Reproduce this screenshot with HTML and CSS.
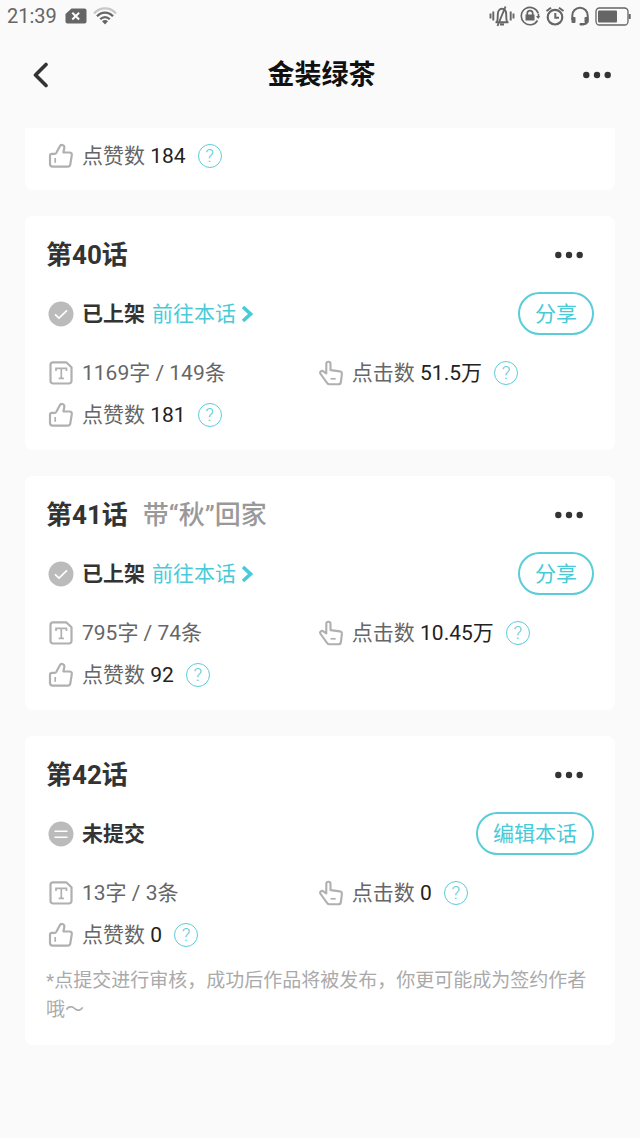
FILE: index.html
```html
<!DOCTYPE html>
<html lang="zh-CN">
<head>
<meta charset="utf-8">
<meta name="viewport" content="width=device-width, initial-scale=1">
<title>金装绿茶</title>
<link rel="stylesheet" href="styles.css">
</head>
<body>
<svg class="sprite" aria-hidden="true">
  <symbol id="like" viewBox="0 0 26 26">
    <path d="M2 12.800c0-1.300.7-2 2-2h2.700c.8 0 1.300-.4 1.700-1.100l3.300-6.200c.6-1.200 1.500-1.700 2.600-1.500 1.600.3 2.300 1.500 2 3l-.9 4.500h6.100c1.700 0 2.600 1 2.300 2.600l-1.500 9.300c-.2 1.500-1 2.200-2.400 2.200H4.500c-1.600 0-2.500-.9-2.500-2.500z" fill="none" stroke="currentColor" stroke-width="2.200" stroke-linejoin="round"/>
    <path d="M7.200 15v4.800" stroke="currentColor" stroke-width="1.700"/>
  </symbol>
  <symbol id="words" viewBox="0 0 26 26">
    <path d="M5 2.300h13.200l5.300 5V21a2.500 2.500 0 0 1-2.500 2.500H5A2.500 2.500 0 0 1 2.500 21V4.800A2.500 2.500 0 0 1 5 2.300z" fill="none" stroke="currentColor" stroke-width="2.200" stroke-linejoin="round"/>
    <path d="M8 11V8.300h10.500V11M13.300 8.300v10M10.700 18.300h5.200" fill="none" stroke="currentColor" stroke-width="1.700"/>
  </symbol>
  <symbol id="tap" viewBox="0 0 26 26">
    <path d="M8.300 13.500V3.900c0-1.300.8-2.200 2.100-2.200s2.100.9 2.100 2.200v6.200l9.300 1.300c1.600.2 2.300 1.100 2.100 2.600l-1 8c-.2 1.500-1 2.300-2.500 2.300h-9c-1 0-1.600-.3-2.200-1.100L2.600 14c-.7-1-.6-2 .2-2.700.9-.7 2-.5 2.800.3z" fill="none" stroke="currentColor" stroke-width="2.100" stroke-linejoin="round"/>
    <path d="M12.500 18.800h5.200" stroke="currentColor" stroke-width="1.700"/>
  </symbol>
  <symbol id="done" viewBox="0 0 26 26">
    <circle cx="13" cy="13" r="12.500" fill="currentColor"/>
    <path d="M7 13.300l4 3.700 8-7.700" fill="none" stroke="#fff" stroke-width="1.700"/>
  </symbol>
  <symbol id="draft" viewBox="0 0 26 26">
    <circle cx="13" cy="13" r="12.500" fill="currentColor"/>
    <path d="M6.500 10.200h13M6.500 16.200h13" stroke="#fff" stroke-width="1.500"/>
  </symbol>
  <symbol id="dots" viewBox="0 0 28 8">
    <circle cx="3.300" cy="4" r="3.200" fill="currentColor"/><circle cx="14" cy="4" r="3.200" fill="currentColor"/><circle cx="24.700" cy="4" r="3.200" fill="currentColor"/>
  </symbol>
  <symbol id="next" viewBox="0 0 12 18">
    <path d="M2 2l7.500 7L2 16" fill="none" stroke="currentColor" stroke-width="3.600"/>
  </symbol>
</svg>

<div class="statusbar">
  <div class="statusbar-side">
    <span>21:39</span>
    <svg width="22" height="16" viewBox="0 0 22 16" aria-label="无SIM卡"><path d="M6.500.5H19.500a2 2 0 0 1 2 2v11a2 2 0 0 1-2 2h-17a2 2 0 0 1-2-2V6z" fill="#666"/><path d="M7.300 4.700l6.800 6.800M14.100 4.700l-6.800 6.800" stroke="#fff" stroke-width="2"/></svg>
    <svg width="24" height="18" viewBox="0 0 24 18" aria-label="无线网络"><g fill="none" stroke="#666" stroke-width="2.200"><path d="M1 6.500C7-.3 17-.3 23 6.500" stroke="#c8c8c8"/><path d="M4 9.300c4.500-5 11.500-5 16 0"/><path d="M7.200 12.300c2.800-2.900 6.800-2.900 9.600 0"/></g><path d="M9 14.300c1.700-1.600 4.300-1.600 6 0L12 17.500z" fill="#666"/></svg>
  </div>
  <div class="statusbar-side statusbar-right">
    <svg width="26" height="22" viewBox="0 0 26 22" aria-label="静音振动"><g fill="none" stroke="#666" stroke-width="1.900"><path d="M1.500 8.500v5M4.300 6.500v9M21.700 6.500v9M24.500 8.500v5"/><path d="M6.500 17.300h13M8 17c.8-2.300.8-4 .8-7.500 0-3.600 1.800-5.800 4.200-5.800s4.200 2.200 4.200 5.800c0 3.500 0 5.200.8 7.500M11 19.500h4M16.500 1.500l-8 19.500"/></g></svg>
    <svg width="20" height="20" viewBox="0 0 20 20" aria-label="方向锁定"><path d="M17.500 14.500A8.700 8.700 0 1 1 18.300 7.500M18.500 8v4" fill="none" stroke="#666" stroke-width="1.600"/><path d="M16 10h4l-1.800 3z" fill="#666"/><rect x="5.500" y="8.500" width="9" height="6" fill="#666"/><path d="M7.300 9V7.300a2.700 2.700 0 0 1 5.400 0V9" fill="none" stroke="#666" stroke-width="1.700"/></svg>
    <svg width="20" height="20" viewBox="0 0 20 20" aria-label="闹钟"><circle cx="10" cy="11.200" r="7.300" fill="none" stroke="#666" stroke-width="2.200"/><path d="M10.300 7v4.800H14M1.500 5L6 1.700M14 1.700L18.500 5" fill="none" stroke="#666" stroke-width="2"/></svg>
    <svg width="20" height="20" viewBox="0 0 20 20" aria-label="耳机"><path d="M2.300 14V9.500a7.700 7.700 0 0 1 15.400 0V14c0 3-1.500 4.300-5 4.300" fill="none" stroke="#666" stroke-width="2"/><rect x="1.500" y="11" width="4" height="6" rx="1" fill="#666"/><rect x="14.500" y="11" width="4" height="6" rx="1" fill="#666"/><rect x="9.500" y="17" width="4.500" height="2.500" rx="1" fill="#666"/></svg>
    <svg width="36" height="19" viewBox="0 0 36 19" aria-label="电量"><rect x="1" y="1" width="32" height="17" rx="3.500" fill="none" stroke="#666" stroke-width="1.300"/><rect x="3" y="3.500" width="19" height="12" rx="1" fill="#666"/><path d="M34.700 7v5" stroke="#666" stroke-width="2"/></svg>
  </div>
</div>

<header class="navbar">
  <button class="icon-button" aria-label="返回"><svg width="18" height="26" viewBox="0 0 18 26"><path d="M14 2.500L3.500 13 14 23.500" fill="none" stroke="currentColor" stroke-width="3.600" stroke-linecap="round" stroke-linejoin="round"/></svg></button>
  <h1 class="navbar-title">金装绿茶</h1>
  <button class="icon-button" aria-label="更多"><svg class="dots"><use href="#dots"/></svg></button>
</header>

<main class="chapters">
  <section class="card card-partial">
    <div class="stat"><svg class="icon"><use href="#like"/></svg><span>点赞数 <b class="value">184</b></span><button class="help" aria-label="点赞数说明">?</button></div>
  </section>

  <section class="card">
    <div class="card-head">
      <h2 class="card-title">第40话</h2>
      <button class="icon-button" aria-label="更多"><svg class="dots"><use href="#dots"/></svg></button>
    </div>
    <div class="state-row">
      <svg class="icon state-icon"><use href="#done"/></svg>
      <strong class="state">已上架</strong>
      <a class="visit" href="#">前往本话<svg class="next"><use href="#next"/></svg></a>
      <button class="pill">分享</button>
    </div>
    <div class="stats">
      <div class="stat"><svg class="icon"><use href="#words"/></svg><span>1169字 / 149条</span></div>
      <div class="stat"><svg class="icon"><use href="#tap"/></svg><span>点击数 <b class="value">51.5万</b></span><button class="help" aria-label="点击数说明">?</button></div>
      <div class="stat"><svg class="icon"><use href="#like"/></svg><span>点赞数 <b class="value">181</b></span><button class="help" aria-label="点赞数说明">?</button></div>
    </div>
  </section>

  <section class="card">
    <div class="card-head">
      <h2 class="card-title">第41话</h2>
      <span class="card-subtitle">带“秋”回家</span>
      <button class="icon-button" aria-label="更多"><svg class="dots"><use href="#dots"/></svg></button>
    </div>
    <div class="state-row">
      <svg class="icon state-icon"><use href="#done"/></svg>
      <strong class="state">已上架</strong>
      <a class="visit" href="#">前往本话<svg class="next"><use href="#next"/></svg></a>
      <button class="pill">分享</button>
    </div>
    <div class="stats">
      <div class="stat"><svg class="icon"><use href="#words"/></svg><span>795字 / 74条</span></div>
      <div class="stat"><svg class="icon"><use href="#tap"/></svg><span>点击数 <b class="value">10.45万</b></span><button class="help" aria-label="点击数说明">?</button></div>
      <div class="stat"><svg class="icon"><use href="#like"/></svg><span>点赞数 <b class="value">92</b></span><button class="help" aria-label="点赞数说明">?</button></div>
    </div>
  </section>

  <section class="card">
    <div class="card-head">
      <h2 class="card-title">第42话</h2>
      <button class="icon-button" aria-label="更多"><svg class="dots"><use href="#dots"/></svg></button>
    </div>
    <div class="state-row">
      <svg class="icon state-icon"><use href="#draft"/></svg>
      <strong class="state">未提交</strong>
      <button class="pill">编辑本话</button>
    </div>
    <div class="stats">
      <div class="stat"><svg class="icon"><use href="#words"/></svg><span>13字 / 3条</span></div>
      <div class="stat"><svg class="icon"><use href="#tap"/></svg><span>点击数 <b class="value">0</b></span><button class="help" aria-label="点击数说明">?</button></div>
      <div class="stat"><svg class="icon"><use href="#like"/></svg><span>点赞数 <b class="value">0</b></span><button class="help" aria-label="点赞数说明">?</button></div>
    </div>
    <p class="note">*点提交进行审核，成功后作品将被发布，你更可能成为签约作者哦～</p>
  </section>
</main>
</body>
</html>
```
FILE: styles.css
```css
* {
  box-sizing: border-box;
}

body {
  margin: 0;
  background: #fafafa;
  color: #666;
  font-family: Roboto, "Noto Sans CJK SC", sans-serif;
  font-size: 21px;
  line-height: 30px;
}

button {
  padding: 0;
  border: 0;
  background: none;
  color: inherit;
  font: inherit;
  cursor: pointer;
}

svg {
  display: block;
  flex: none;
}

.sprite {
  position: absolute;
  width: 0;
  height: 0;
}

.statusbar {
  display: flex;
  justify-content: space-between;
  align-items: center;
  height: 32px;
  padding: 0 9px 0 7px;
  font-size: 20px;
}

.statusbar-side {
  display: flex;
  align-items: center;
  gap: 6px;
}

.statusbar-right {
  gap: 5px;
}

.statusbar-side > span {
  margin-right: 2px;
}

.navbar {
  display: flex;
  justify-content: space-between;
  align-items: center;
  height: 86px;
  margin-bottom: 10px;
  padding: 0 29px 0 32px;
  color: #333;
}

.navbar .icon-button {
  display: flex;
  width: 28px;
}

.navbar-title {
  margin: 0;
  color: #111;
  font-size: 27px;
  font-weight: 700;
}

.icon-button {
  color: #333;
}

.dots {
  width: 28px;
  height: 8px;
}

.chapters {
  display: flex;
  flex-direction: column;
  gap: 26px;
  padding: 0 25px 40px;
}

.card {
  padding: 20px 21px 14px;
  border-radius: 8px;
  background: #fff;
}

.card-partial {
  padding-top: 7px;
  padding-bottom: 13px;
  border-radius: 0 0 8px 8px;
}

.card-head {
  display: flex;
  align-items: center;
  gap: 15px;
  height: 38px;
  padding-right: 11px;
  font-size: 26px;
}

.card-head .icon-button {
  margin-left: auto;
}

.card-title {
  margin: 0;
  color: #333;
  font-size: 26px;
  font-weight: 700;
}

.card-subtitle {
  color: #999;
  font-weight: 500;
}

.state-row {
  display: flex;
  align-items: center;
  margin: 18px 0 17px;
}

.state-row,
.pill {
  height: 43px;
}

.icon {
  width: 26px;
  height: 26px;
  margin: 0 8px 0 2px;
  color: #b0b0b0;
}

.state-icon {
  color: #bbb;
}

.state {
  margin-right: 7px;
  color: #333;
  font-weight: 700;
}

.visit {
  display: flex;
  align-items: center;
  gap: 5px;
  color: #49cad8;
  text-decoration: none;
}

.next {
  width: 12px;
  height: 18px;
}

.pill {
  margin-left: auto;
  padding: 0 15px;
  border: 2px solid #5acdd8;
  border-radius: 22px;
  color: #49cad8;
}

.stats {
  display: grid;
  grid-template-columns: 97fr 100fr;
}

.stat {
  display: flex;
  align-items: center;
  height: 42px;
  white-space: nowrap;
}

.value {
  color: #222;
  font-weight: 400;
}

.help {
  width: 24px;
  height: 24px;
  margin-left: 12px;
  border: 1px solid #5acdd8;
  border-radius: 50%;
  color: #5acdd8;
  font-size: 19px;
  font-weight: 300;
  line-height: 22px;
}

.note {
  margin: 10px 0 7px;
  color: #aaa;
  font-size: 19px;
  line-height: 29px;
}
```
